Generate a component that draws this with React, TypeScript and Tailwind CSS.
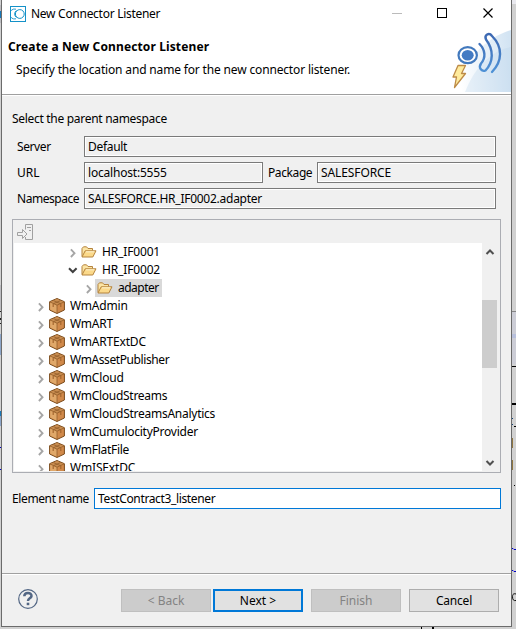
import React from "react";

const packages = [
  ["WmAdmin", "tracking-[-0.2px]"],
  ["WmART", "tracking-[-0.2px]"],
  ["WmARTExtDC", "tracking-[-0.2px]"],
  ["WmAssetPublisher", "tracking-[-0.4px]"],
  ["WmCloud", "tracking-[-0.2px]"],
  ["WmCloudStreams", "tracking-[-0.28px]"],
  ["WmCloudStreamsAnalytics", "tracking-[-0.26px]"],
  ["WmCumulocityProvider", "tracking-[-0.25px]"],
  ["WmFlatFile", "tracking-[-0.28px]"],
  ["WmISExtDC", "tracking-[-0.15px]"],
];

function Folder() {
  return (
    <svg width="16" height="12" viewBox="0 0 16 12" className="shrink-0">
      <path d="M1 10.5V2.5L2.5 .8H5.5L7 2.5H11.5V4.5" fill="#fbe4a4" stroke="#b5833d" />
      <path d="M1 11L4.2 4.8H15L11.8 11Z" fill="#fbd98a" stroke="#b5833d" strokeLinejoin="round" />
      <path d="M5 5.8H13.3" stroke="#fff5d2" />
    </svg>
  );
}

function Box() {
  return (
    <svg width="16" height="16" viewBox="0 0 16 16" className="shrink-0">
      <path d="M8 .5L15.4 3.7V12L8 15.5L.6 12V3.7Z" fill="#d0894a" stroke="#7a4b1c" strokeLinejoin="round" />
      <path d="M1.2 4.2L8 7.2V14.8L1.2 11.6Z" fill="#e0a869" />
      <path d="M1 4L8 1L15 4L8 7.2Z" fill="#c98d50" />
      <path d="M1 4L8 7.2L15 4M8 7.2V15M4.3 2.5L11.5 5.7M11.7 2.5L4.5 5.7" fill="none" stroke="#8b5725" strokeWidth=".7" />
      <path d="M4.2 6V9M11.8 6V9" stroke="#a5672f" strokeWidth="1.2" />
    </svg>
  );
}

function Arrow({ open = false }: { open?: boolean }) {
  return (
    <svg width="10" height="12" viewBox="0 0 10 12" className="shrink-0" fill="none">
      {open ? (
        <path d="M1 4.2L4.8 8L8.6 4.2" stroke="#404040" strokeWidth="2" />
      ) : (
        <path d="M2.9 3.4L6.5 7.2L2.9 11" stroke="#a6a6a6" strokeWidth="1.9" />
      )}
    </svg>
  );
}

function Field({ children, className = "" }: { children: React.ReactNode; className?: string }) {
  return (
    <div className={`flex h-[21px] items-center border border-[#7a7a7a] bg-[#f0f0f0] pl-[3px] shadow-[inset_0_0_0_1px_#fff] ${className}`}>
      <span>{children}</span>
    </div>
  );
}

function HeaderArt() {
  return (
    <svg width="64" height="68" viewBox="0 0 64 68" fill="none">
      <defs>
        <linearGradient id="sky" x1="0" y1="0.6" x2="1" y2="0.5">
          <stop offset="0.1" stopColor="#ffffff" />
          <stop offset="1" stopColor="#d3e4f3" />
        </linearGradient>
        <linearGradient id="wave" x1="0" y1="0" x2="0" y2="1">
          <stop offset="0" stopColor="#3c68b2" />
          <stop offset="1" stopColor="#4f92d6" />
        </linearGradient>
      </defs>
      <path d="M6 66C20 32 38 12 64 4V66Z" fill="url(#sky)" />
      <path d="M64 21C46 24 28 40 18 66H64Z" fill="#b9d5ec" opacity=".3" />
      <ellipse cx="20.7" cy="29.2" rx="9.2" ry="8" fill="#fff" stroke="#4279bd" strokeWidth="2.2" />
      <ellipse cx="20.7" cy="29.2" rx="6" ry="5.2" fill="#447bc3" />
      <path d="M32.5 18C38.5 24 39 32 34 37.5C31 42 35 46 38.5 44.5C46.5 36 47 24 39 13.5C37 9 42 6 45 10C56 21 55.500 35 45 46" stroke="url(#wave)" strokeWidth="2.4" strokeLinecap="round" />
      <path d="M11 39.500H18.500L14.500 47.500H18.500L7.500 61.500L9.500 51H6Z" fill="#ffeb9c" stroke="#bd8b47" strokeWidth="1.3" strokeLinejoin="round" />
    </svg>
  );
}

/* Slivers of the editor that lie behind the dialog's edges. */
function Backdrop() {
  return (
    <>
      <svg className="absolute left-0 top-0" width="1" height="629" viewBox="0 0 1 629">
        <path d="M.5 5V23M.5 285V310" stroke="#bcbcc0" />
        <path d="M.5 11V18M.5 411V416" stroke="#1878b8" />
        <path d="M.5 311V312M.5 318V320M.5 323V324" stroke="#222" />
        <path d="M.5 334V355M.5 416V426" stroke="#8ca5c8" />
        <path d="M.5 447V448M.5 469V470" stroke="#0000c8" />
      </svg>
      <svg className="absolute left-[512px] top-0" width="4" height="629" viewBox="0 0 4 629">
        <path d="M0 0H4V4H0Z" fill="#e9e9ef" />
        <path d="M0 312H4V364H0Z" fill="#cccdd6" />
        <path d="M0 334H4V338H0Z" fill="#b8c0dc" />
        <path d="M0 311.500H4" stroke="#858585" />
        <path d="M0 366.500H4M2 426.500H4M2 485.500H3" stroke="#000" />
        <path d="M0 404H4" stroke="#000" strokeWidth="2" />
        <path d="M0 418.500H1M0 424.500H1" stroke="#12457a" />
        <path d="M.5 438V448M.5 460V470" stroke="#8f7640" />
        <path d="M0 548.500H1L2 549.500H4M0 570.500H1L2 571.500H4" stroke="#0000c8" fill="none" />
        <path d="M4 594C1 593 .5 595 .5 597C.5 600 2 601 4 600.500" stroke="#111" fill="none" />
      </svg>
      <svg className="absolute left-[421px] top-[627px]" width="13" height="2" viewBox="0 0 13 2">
        <path d="M0 0H1V2H0ZM11 0H13V2H11Z" fill="#000" />
      </svg>
    </>
  );
}

export default function App() {
  return (
    <div className="relative flex h-[629px] w-[516px] flex-col overflow-hidden bg-[#d1d1d1] pl-px font-['Noto_Sans','Noto_Sans_CJK_KR',sans-serif] text-[12px] leading-[18px] text-black">
      <Backdrop />
      <main className="flex h-[627px] w-[511px] flex-col border-x border-b border-[#6b6b6b] bg-[#f0f0f0]">
        <header className="relative h-[94px] bg-white">
          <div className="flex h-[27px] items-center pl-2">
            <svg width="16" height="16" viewBox="0 0 16 16" fill="none" stroke="#1491c8">
              <rect x=".5" y=".5" width="15" height="15" />
              <circle cx="9.8" cy="8" r="4.4" />
              <path d="M6 3.2A5 5 0 1 0 6 12.8M6.5 4.5A4.2 4.2 0 0 0 6.5 11.5" strokeWidth=".9" />
            </svg>
            <span className="ml-[5px] tracking-[-0.28px]">New Connector Listener</span>
          </div>
          <div className="pl-[6px] pt-[11px] font-bold tracking-[0.12px]">Create a New Connector Listener</div>
          <div className="pl-[14px] pt-[5px] tracking-[-0.16px]">Specify the location and name for the new connector listener.</div>
          <svg className="absolute right-px top-0" width="118" height="27" viewBox="0 0 118 27" fill="none" stroke="#000">
            <path d="M0 13.5H10" stroke="#bbb" />
            <rect x="45.5" y="8.5" width="9" height="9" />
            <path d="M91.500 8.500L100.500 17.500M100.500 8.500L91.500 17.500" strokeWidth="1.2" />
          </svg>
          <div className="absolute right-0 top-[26px]"><HeaderArt /></div>
        </header>
        <div className="h-[2px] shrink-0 border-t border-[#a0a0a0] bg-white" />
        <section className="flex h-[477px] flex-col px-[10px] pt-[14px]">
          <div className="tracking-[-0.3px]">Select the parent namespace</div>
          <div className="mt-[8px] flex flex-col gap-[5px] px-[5px]">
            <div className="flex items-center"><span className="w-[67px] tracking-[-0.4px]">Server</span><Field className="flex-1 tracking-[-0.3px]">Default</Field></div>
            <div className="flex items-center"><span className="w-[67px]">URL</span><Field className="w-[179px] tracking-[-0.2px]">localhost:5555</Field><span className="w-[54px] pl-[5px] tracking-[-0.4px]">Package</span><Field className="flex-1 tracking-[-0.1px]">SALESFORCE</Field></div>
            <div className="flex items-center"><span className="w-[67px] tracking-[-0.45px]">Namespace</span><Field className="flex-1 tracking-[-0.26px]">SALESFORCE.HR_IF0002.adapter</Field></div>
          </div>
          <div className="mt-[10px] flex h-[254px] w-[489px] flex-col border border-[#abadb3] p-px">
            <div className="h-[22px] pl-[3px] pt-[3px]">
              <svg width="17" height="17" viewBox="0 0 17 17" fill="none" stroke="#a0a0a0">
                <path d="M8.5 5.5V.5H15.5V15.5H8.5V13" />
                <path d="M.5 8.5H5.5V5.5L10 10L5.5 14.5V11.5H.5Z" />
                <path d="M10 3.5H14M12 6.5H14" />
              </svg>
            </div>
            <div className="flex h-[228px]">
              <div className="h-full flex-1 overflow-hidden bg-white">
                <div className="flex h-[18px] items-center pl-[54px]"><Arrow /><span className="w-[3px]" /><Folder /><span className="ml-[5px] tracking-[-0.15px]">HR_IF0001</span></div>
                <div className="flex h-[18px] items-center pl-[54px]"><Arrow open /><span className="w-[3px]" /><Folder /><span className="ml-[5px] tracking-[-0.15px]">HR_IF0002</span></div>
                <div className="flex h-[18px] items-center pl-[70px]"><Arrow /><div className="ml-px flex h-[18px] w-[67px] items-center bg-[#d9d9d9] pl-[2px]"><Folder /><span className="ml-[5px] tracking-[-0.5px]">adapter</span></div></div>
                {packages.map(([name, spacing]) => (
                  <div key={name} className="flex h-[18px] items-center pl-[22px]"><Arrow /><span className="w-[3px]" /><Box /><span className={`ml-[5px] ${spacing}`}>{name}</span></div>
                ))}
              </div>
              <div className="flex w-[17px] flex-col">
                <svg width="17" height="57" viewBox="0 0 17 57" fill="none"><path d="M4.5 11L8 7.5L11.500 11" stroke="#505050" strokeWidth="2" /></svg>
                <div className="h-[68px] w-[15px] bg-[#cdcdcd]" />
                <svg className="mt-auto" width="17" height="17" viewBox="0 0 17 17" fill="none"><path d="M4.5 7L8 10.500L11.500 7" stroke="#505050" strokeWidth="2" /></svg>
              </div>
            </div>
          </div>
          <div className="mt-[15px] flex w-[489px] items-center">
            <span className="w-[82px] tracking-[-0.38px]">Element name</span>
            <div className="flex h-[21px] flex-1 items-center border border-[#0078d7] bg-white pl-[3px] tracking-[-0.36px]">TestContract3_listener</div>
          </div>
        </section>
        <div className="h-[2px] shrink-0 border-t border-[#a0a0a0] bg-white" />
        <footer className="flex flex-1 items-start pl-[16px] pt-[14px]">
          <svg width="20" height="20" viewBox="0 0 20 20" fill="none" stroke="#526684"><circle cx="10" cy="10" r="9.3" strokeWidth="1.2" /><path d="M6.3 7.3C6.3 2.800 13.700 2.800 13.5 7C13.2 9.500 10 9.300 10 12" strokeWidth="2.5" /><path d="M10 13.700V16.200" strokeWidth="2.6" /></svg>
          <div className="ml-[83px] flex text-center leading-[22px]">
            <div className="h-[23px] w-[90px] border border-[#bfbfbf] bg-[#ccc] text-[#838383]">&lt; Back</div>
            <div className="ml-[2px] h-[23px] w-[90px] border-2 border-[#0078d7] bg-[#e1e1e1] leading-[20px]">Next &gt;</div>
            <div className="ml-[8px] h-[23px] w-[90px] border border-[#bfbfbf] bg-[#ccc] text-[#838383]">Finish</div>
            <div className="ml-[8px] h-[23px] w-[90px] border border-[#adadad] bg-[#e1e1e1] tracking-[-0.2px]">Cancel</div>
          </div>
        </footer>
      </main>
    </div>
  );
}
